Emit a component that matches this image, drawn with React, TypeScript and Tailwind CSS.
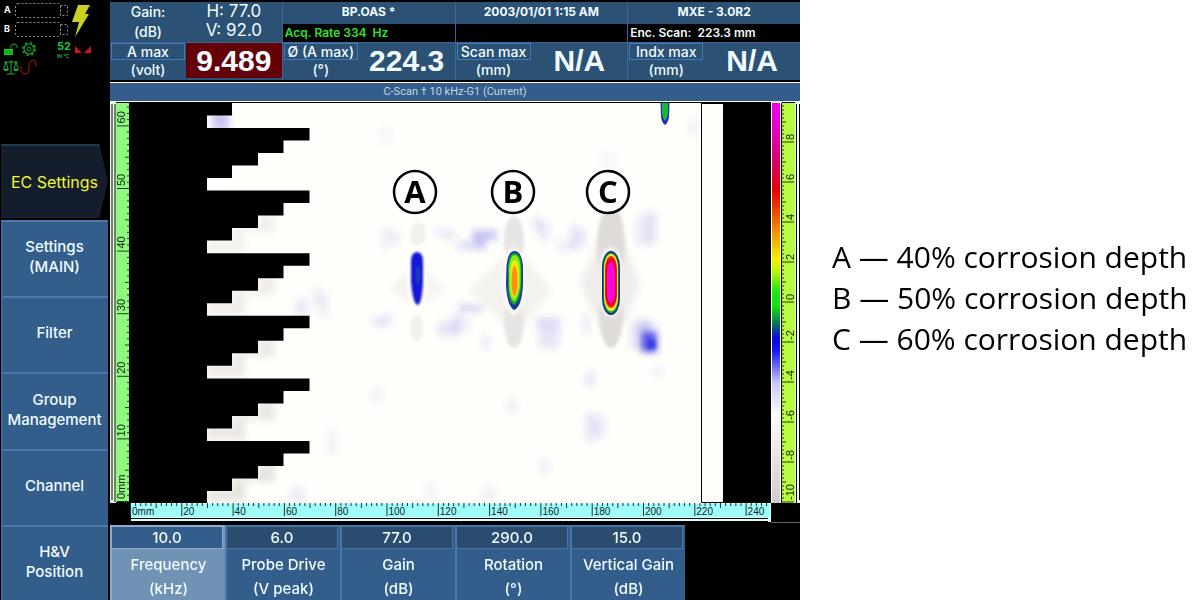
import React from 'react';

const sideMenu = [
  ["Settings", "(MAIN)"],
  ["Filter"],
  ["Group", "Management"],
  ["Channel"],
  ["H&V", "Position"],
];

const parameters = [
  { value: "10.0", name: "Frequency", unit: "(kHz)", selected: true },
  { value: "6.0", name: "Probe Drive", unit: "(V peak)", selected: false },
  { value: "77.0", name: "Gain", unit: "(dB)", selected: false },
  { value: "290.0", name: "Rotation", unit: "(°)", selected: false },
  { value: "15.0", name: "Vertical Gain", unit: "(dB)", selected: false },
];

const readings = [
  { name: "A max", unit: "(volt)", value: "9.489", alarm: true },
  { name: "Ø (A max)", unit: "(°)", value: "224.3", alarm: false },
  { name: "Scan max", unit: "(mm)", value: "N/A", alarm: false },
  { name: "Indx max", unit: "(mm)", value: "N/A", alarm: false },
];

const legend = [
  { letter: "A", text: "40% corrosion depth" },
  { letter: "B", text: "50% corrosion depth" },
  { letter: "C", text: "60% corrosion depth" },
];

// faint background signal: x, y, width, height, opacity
const noise = [
  [212, 112, 17, 18, 0.28],
  [382, 228, 7, 20, 0.09],
  [390, 232, 9, 12, 0.1],
  [436, 229, 16, 6, 0.1],
  [444, 234, 12, 6, 0.1],
  [472, 230, 25, 10, 0.26],
  [474, 236, 12, 12, 0.14],
  [458, 241, 28, 9, 0.15],
  [533, 217, 9, 14, 0.1],
  [539, 222, 10, 18, 0.1],
  [556, 240, 18, 12, 0.07],
  [570, 225, 8, 24, 0.12],
  [578, 229, 7, 18, 0.12],
  [636, 216, 10, 30, 0.09],
  [645, 212, 11, 32, 0.13],
  [372, 318, 12, 8, 0.12],
  [382, 314, 10, 12, 0.1],
  [458, 304, 26, 8, 0.18],
  [452, 314, 10, 18, 0.12],
  [438, 322, 20, 14, 0.12],
  [462, 316, 8, 14, 0.08],
  [536, 317, 24, 12, 0.16],
  [539, 328, 20, 20, 0.12],
  [583, 314, 6, 20, 0.1],
  [482, 336, 6, 14, 0.12],
  [630, 320, 20, 28, 0.12],
  [638, 322, 18, 30, 0.16],
  [314, 288, 6, 20, 0.1],
  [320, 292, 8, 24, 0.09],
  [296, 298, 12, 20, 0.1],
  [690, 120, 6, 14, 0.1],
  [586, 413, 8, 28, 0.12],
  [594, 416, 10, 22, 0.12],
  [586, 372, 8, 14, 0.12],
  [372, 388, 10, 14, 0.07],
  [508, 400, 8, 12, 0.1],
  [328, 430, 8, 24, 0.08],
  [290, 488, 14, 14, 0.1],
  [426, 484, 8, 14, 0.08],
  [482, 488, 14, 12, 0.08],
  [600, 155, 14, 10, 0.05],
  [380, 128, 10, 14, 0.05],
  [654, 366, 8, 12, 0.07],
  [540, 460, 10, 14, 0.06],
];

const StatusIcons = () => (
  <svg viewBox="0 0 110 82" className="block w-full" fill="none">
    <g fill="#fff" fontSize="9" fontWeight="700" fontFamily="Inter, sans-serif">
      <text x="4" y="13">A</text>
      <text x="4" y="32">B</text>
    </g>
    <g stroke="#8c8ca0" strokeDasharray="2 2">
      <rect x="15.500" y="3.500" width="45" height="14" rx="2" />
      <rect x="60.500" y="5.500" width="7" height="10" />
      <rect x="15.500" y="22.500" width="45" height="14" rx="2" />
      <rect x="60.500" y="24.500" width="7" height="10" />
    </g>
    <path d="M78 5H90L85 14H89L75 37L79 22H72Z" fill="#c8d020" />
    {/* padlock */}
    <rect x="4" y="49" width="9" height="6" fill="#10d020" />
    <path d="M11 49V46Q11 44 14 44Q17 44 17 46V48" stroke="#10b020" />
    <path d="M4 51H13M4 53H13" stroke="#087010" strokeWidth="0.5" />
    {/* gear */}
    <circle cx="29" cy="49" r="5" stroke="#10a828" strokeWidth="1.2" />
    <circle cx="29" cy="49" r="6.400" stroke="#10a828" strokeWidth="1.4" strokeDasharray="2.4 2.6" />
    <circle cx="29" cy="49" r="2" stroke="#10a828" />
    <g fill="#20c840" fontFamily="Inter, sans-serif">
      <text x="57" y="50" fontSize="11" fontWeight="700">52</text>
      <text x="57" y="58" fontSize="5">IN °C</text>
    </g>
    <path d="M75 46L82 53H75ZM91 46V53H84Z" fill="#d01028" />
    {/* balance */}
    <path d="M4 62H18M11 60V74M7 74H15M6 62L3.500 69M6 62L8 69M16 62L14 69M16 62L18.500 69" stroke="#20a838" />
    <path d="M3 69Q6 73 9 69ZM13 69Q16 73 19 69Z" fill="#20c840" />
    <path d="M21 66V71Q22 74 25 74Q29 74 29 70V64Q30 60 33 60Q36 60 36 64V67" stroke="#a01818" />
  </svg>
);

const VerticalRuler = () => (
  <g>
    <rect x="110" y="102" width="6" height="401" fill="#e4ffe0" />
    <path d="M112 104V500M115 104V502" stroke="#000" />
    <rect x="116" y="103" width="13" height="399" fill="#90fa80" />
    {Array.from({ length: 64 }, (_, i) => {
      const y = 501.500 - i * 6.260;
      const start = i % 10 === 0 ? 117 : i % 5 === 0 ? 125 : 127;
      return <path key={i} d={`M${start} ${y}H129`} stroke="#184018" />;
    })}
    {[0, 10, 20, 30, 40, 50, 60].map((v) => (
      <text key={v} transform={`translate(125 ${499 - v * 6.260}) rotate(-90)`} fontSize="11" fill="#102010">
        {v === 0 ? "0mm" : v}
      </text>
    ))}
  </g>
);

const HorizontalRuler = () => (
  <g>
    <rect x="110" y="503" width="21" height="20" fill="#000" />
    <rect x="131" y="503" width="640" height="19" fill="#d8ffff" />
    <rect x="131" y="504" width="639" height="13" fill="#a0fcf8" />
    <path d="M131 518.500H768M131 521.500H768" stroke="#000" />
    {Array.from({ length: 125 }, (_, i) => {
      const x = 130.500 + i * 5.130;
      const end = i % 10 === 0 ? 516 : i % 5 === 0 ? 508 : 506;
      return <path key={i} d={`M${x} 503V${end}`} stroke="#103838" />;
    })}
    {Array.from({ length: 13 }, (_, i) => (
      <text key={i} x={132 + i * 51.300} y="515" fontSize="10" fill="#102028">
        {i === 0 ? "0mm" : i * 20}
      </text>
    ))}
  </g>
);

const ColorScale = () => (
  <g>
    <rect x="771" y="102" width="11" height="401" fill="#fff" />
    <rect x="772" y="103" width="8" height="400" fill="url(#amplitude)" />
    <rect x="782" y="103" width="13" height="400" fill="#b8fc40" />
    <rect x="795" y="102" width="5" height="401" fill="#f4ffe8" />
    <path d="M781.500 103V503M796.500 104V503M799.500 104V500" stroke="#000" />
    {Array.from({ length: 100 }, (_, i) => {
      const y = 502 - i * 4;
      const end = i % 10 === 0 ? 794 : i % 5 === 0 ? 786 : 784;
      return <path key={i} d={`M781 ${y}H${end}`} stroke="#283808" />;
    })}
    {[8, 6, 4, 2, 0, -2, -4, -6, -8, -10].map((v) => (
      <text key={v} transform={`translate(794 ${300 - v * 20}) rotate(-90)`} fontSize="11" fill="#182008">
        {v}
      </text>
    ))}
  </g>
);

const Marker = ({ x, letter }: { x: number; letter: string }) => (
  <g>
    <circle cx={x} cy="192" r="21" fill="#fff" stroke="#000" strokeWidth="2.500" />
    <text x={x} y="203" textAnchor="middle" fontSize="31" fontWeight="700" fontFamily="'Open Sans', sans-serif">
      {letter}
    </text>
  </g>
);

const CScan = () => {
  // saw-tooth edge of the area that has not been scanned
  let edge = "M130 102H232V115.500H207V128H309";
  for (let i = 0; i < 6; i++) {
    const y = 128 + i * 62.600;
    edge += `V${y}H309.500V${y + 12.500}H283.500V${y + 25}H258V${y + 37.500}H232V${y + 50}H207V${Math.min(y + 62.600, 503)}`;
  }
  edge += "H130Z";

  return (
    <svg
      viewBox="110 101 690 422"
      className="block w-full bg-black"
      fontFamily="'Liberation Sans', sans-serif"
      role="img"
      aria-label="C-Scan"
    >
      <defs>
        <linearGradient id="amplitude" x1="0" y1="0" x2="0" y2="1">
          <stop offset="0" stopColor="#f000f0" />
          <stop offset="0.060" stopColor="#e800c8" />
          <stop offset="0.150" stopColor="#d80060" />
          <stop offset="0.220" stopColor="#e80000" />
          <stop offset="0.310" stopColor="#f08000" />
          <stop offset="0.390" stopColor="#f8f000" />
          <stop offset="0.420" stopColor="#b8f800" />
          <stop offset="0.470" stopColor="#20e810" />
          <stop offset="0.510" stopColor="#10e010" />
          <stop offset="0.550" stopColor="#087850" />
          <stop offset="0.590" stopColor="#0808e0" />
          <stop offset="0.620" stopColor="#1818f0" />
          <stop offset="0.660" stopColor="#7070f0" />
          <stop offset="0.700" stopColor="#c8c8f8" />
          <stop offset="0.780" stopColor="#fcfcfc" />
          <stop offset="0.900" stopColor="#e4e0e0" />
          <stop offset="1" stopColor="#d0cccc" />
        </linearGradient>
        <filter id="soft" x="-50%" y="-50%" width="200%" height="200%">
          <feGaussianBlur stdDeviation="3" />
        </filter>
        <filter id="halo" x="-50%" y="-50%" width="200%" height="200%">
          <feGaussianBlur stdDeviation="1.500" />
        </filter>
        <filter id="edge" x="-50%" y="-50%" width="200%" height="200%">
          <feGaussianBlur stdDeviation="0.800" />
        </filter>
        <clipPath id="plot">
          <rect x="130" y="102" width="593" height="401" />
        </clipPath>
      </defs>

      <g clipPath="url(#plot)">
        <rect x="130" y="102" width="593" height="401" fill="#fffefa" />
        <g filter="url(#soft)">
          {noise.map(([x, y, w, h, opacity], i) => (
            <rect key={i} x={x} y={y} width={w} height={h} fill="#3838e0" opacity={opacity} />
          ))}
          {[240, 303, 365, 428, 490].map((y) => (
            <path key={y} d={`M207 ${y}H232V${y - 12}H258V${y - 25}H275V${y - 8}H245V${y + 11}H207Z`} fill="#dcd8d4" opacity={y / 700} />
          ))}
          <path d="M390 290L417 262L446 290L417 306Z" fill="#f4f3f0" />
          <path d="M468 290L500 262L514 250L528 262L552 290L524 324H505Z" fill="#f3f2ef" />
          <path d="M580 284L598 240H624L640 284L624 326H600Z" fill="#f0eeec" />
          <rect x="642" y="332" width="15" height="20" fill="#2020e0" opacity="0.700" />
        </g>
        <g filter="url(#halo)">
          <ellipse cx="418" cy="234" rx="8" ry="12" fill="#f1f0ed" />
          <ellipse cx="417" cy="328" rx="7" ry="13" fill="#f1f0ed" />
          <ellipse cx="514" cy="240" rx="10" ry="24" fill="#e7e5e3" />
          <ellipse cx="514" cy="322" rx="10" ry="26" fill="#e7e5e3" />
          <ellipse cx="611" cy="248" rx="14" ry="44" fill="#dfdbd9" />
          <ellipse cx="611" cy="314" rx="12" ry="34" fill="#dfdbd9" />
          <ellipse cx="417" cy="279" rx="10" ry="32" fill="#fffefa" />
          <ellipse cx="514" cy="281" rx="12" ry="34" fill="#faf9f6" />
          <ellipse cx="611" cy="282" rx="14" ry="36" fill="#f0edec" />
        </g>

        {/* A */}
        <g filter="url(#edge)">
          <path d="M411 262Q411 252 417 252Q423 252 423 262V282Q422 304 417.500 305Q413 304 411 282Z" fill="#1414d8" />
          <ellipse cx="418" cy="275" rx="1.500" ry="9" fill="#1850a0" />
        </g>
        {/* B */}
        <path d="M506.500 266Q508 251 514.500 251Q521.500 251 523 266V284Q522 307 514 310Q507 306 506 284Z" fill="#1838a0" />
        <path d="M508 266Q509 253 514.500 253Q521 253 521.500 266V284Q520 302 514 305Q508 302 508 284Z" fill="#18a030" />
        <path d="M509 268Q510 255 514.500 255Q520 255 520.500 268V283Q519 298 514 302Q509 298 509 283Z" fill="#80f010" />
        <path d="M510.500 272Q511 260 515 260Q518.500 261 519 274V284Q518 295 514 298Q510.500 294 510.500 284Z" fill="#f0e818" />
        <ellipse cx="514.500" cy="281" rx="3" ry="15" fill="#ff9010" />
        {/* C */}
        <rect x="602" y="251" width="18" height="64" rx="9" ry="16" fill="#103868" />
        <rect x="603.500" y="253" width="15" height="60" rx="7.500" ry="15" fill="#20b048" />
        <rect x="604" y="254" width="14" height="57" rx="7" ry="14" fill="#f0f020" />
        <rect x="605" y="256" width="12" height="52" rx="6" ry="13" fill="#f03000" />
        <rect x="605.500" y="258" width="11" height="48" rx="5.500" ry="12" fill="#e80030" />
        <rect x="607" y="262" width="8" height="41" rx="4" ry="10" fill="#f808d8" />

        <path d="M660.500 102H669.500L669 117Q668 123 665 125Q662 123 661 117Z" fill="#2030b8" />
        <path d="M662 102H668V114Q667 119 665 121Q663 119 662 114Z" fill="#18b838" />
        <rect x="648" y="340" width="8" height="9" fill="#0808e8" opacity="0.400" filter="url(#halo)" />
      </g>

      <path d={edge} fill="#000" />
      <path d="M701.500 103V502.500H723M701 103.500H723" stroke="#000" fill="none" />
      <rect x="723" y="103" width="48" height="400" fill="#000" />
      <path d="M110 101.500H800" stroke="#fff" />
      <path d="M116 102.500H800" stroke="#000" />
      <path d="M110 522.500H131M771 522.500H800" stroke="#606468" />

      <Marker x={415} letter="A" />
      <Marker x={513} letter="B" />
      <Marker x={608} letter="C" />

      <VerticalRuler />
      <HorizontalRuler />
      <ColorScale />
    </svg>
  );
};

const Header = () => (
  <header className="grid grid-cols-4 gap-x-px bg-[#41658f] mt-0.5 border-b-2 border-black text-sm font-medium">
    <div className="flex bg-[#2b5175] h-10">
      <div className="w-[76px] text-center leading-5">
        <div>Gain:</div>
        <div>(dB)</div>
      </div>
      <div className="flex-1 text-center text-[17px] font-normal leading-[19px]">
        <div>H: 77.0</div>
        <div>V: 92.0</div>
      </div>
    </div>
    <div className="bg-[#2b5175] text-xs font-bold">
      <div className="h-5 leading-5 text-center">BP.OAS *</div>
      <div className="h-[18px] mt-0.5 leading-[18px] bg-black text-[#30e030] font-semibold px-0.5 whitespace-pre">Acq. Rate 334  Hz</div>
    </div>
    <div className="bg-[#2b5175] text-xs font-bold">
      <div className="h-5 leading-5 text-center">2003/01/01 1:15 AM</div>
      <div className="h-[18px] mt-0.5 bg-black"></div>
    </div>
    <div className="bg-[#2b5175] text-xs font-bold">
      <div className="h-5 leading-5 text-center">MXE - 3.0R2</div>
      <div className="h-[18px] mt-0.5 leading-[18px] bg-black font-semibold px-0.5 whitespace-pre">Enc. Scan:  223.3 mm</div>
    </div>

    {readings.map((reading, index) => (
      <div key={index} className="flex bg-[#2b5175] h-[38px] border-t border-[#41658f]">
        <div className="w-[74px] shrink-0 text-center whitespace-nowrap ml-px">
          <div className="h-[17px] leading-[15px] border border-[#4078c0]">{reading.name}</div>
          <div className="leading-5">{reading.unit}</div>
        </div>
        <div
          className={
            reading.alarm
              ? "flex-1 flex items-center justify-center bg-[#640008] ml-px mb-0.5 font-['Liberation_Sans',sans-serif] text-[30px] leading-none font-bold"
              : "flex-1 flex items-center justify-center ml-px mb-0.5 font-['Liberation_Sans',sans-serif] text-[30px] leading-none font-bold"
          }
        >
          {reading.value}
        </div>
      </div>
    ))}
  </header>
);

const App = () => {
  return (
    <div className="flex min-h-screen bg-white">
      <main className="flex w-2/3 bg-black text-[#f0fcff] font-['Inter',sans-serif]">
        <nav className="flex flex-col w-[110px] shrink-0 pl-px pr-0.5 text-[15px] leading-5 font-medium">
          <div className="h-36 -ml-px -mr-0.5">
            <StatusIcons />
          </div>
          <button className="h-[74px] mb-0.5 bg-[#141d2b] border-t-2 border-[#24384c] text-[#f0f830] font-normal text-base [clip-path:polygon(0_0,92%_0,100%_50%,92%_100%,0_100%)]">
            EC Settings
          </button>
          {sideMenu.map((lines, index) => (
            <button
              key={index}
              className="flex-1 bg-[#335d8a] border-t-2 border-t-[#4c79a6] border-l-2 border-l-[#3d6c9a] pb-1 pr-0.5"
            >
              {lines.map((line) => (
                <span key={line} className="block">{line}</span>
              ))}
            </button>
          ))}
        </nav>

        <section className="flex flex-col flex-1 min-w-0">
          <Header />
          <h1 className="h-[19px] leading-[18px] border-t border-white bg-[#335d8a] text-center text-[#c4d8e4] text-[11px] font-['Roboto',sans-serif]">
            C-Scan † 10 kHz-G1 (Current)
          </h1>
          <CScan />
          <div className="flex-1 grid grid-cols-5 w-5/6 mt-0.5">
            {parameters.map((item, index) => (
              <button
                key={index}
                className={
                  item.selected
                    ? "flex flex-col bg-[#7092b4] border-t-2 border-l-2 border-[#8cacca] text-[15px] font-medium whitespace-nowrap"
                    : "flex flex-col bg-[#335d8a] border-t-2 border-l-2 border-[#4876a6] text-[15px] font-medium whitespace-nowrap"
                }
              >
                <span
                  className={
                    item.selected
                      ? "self-stretch h-[22px] leading-[21px] mr-0.5 bg-[#335d8a] border-b border-r border-[#8cacca]"
                      : "self-stretch h-[22px] leading-[21px] mr-0.5 bg-[#2a4c6e] border-b border-r border-[#4876a6]"
                  }
                >
                  {item.value}
                </span>
                <span className="self-stretch leading-6 mt-1">{item.name}</span>
                <span className="self-stretch leading-6">{item.unit}</span>
              </button>
            ))}
          </div>
        </section>
      </main>

      <aside className="flex-1 pt-[236px] pl-8 font-['Open_Sans',sans-serif] text-[30px] leading-[41px] text-black whitespace-nowrap">
        <ul>
          {legend.map((item) => (
            <li key={item.letter}>
              {item.letter} — {item.text}
            </li>
          ))}
        </ul>
      </aside>
    </div>
  );
};

export default App;
